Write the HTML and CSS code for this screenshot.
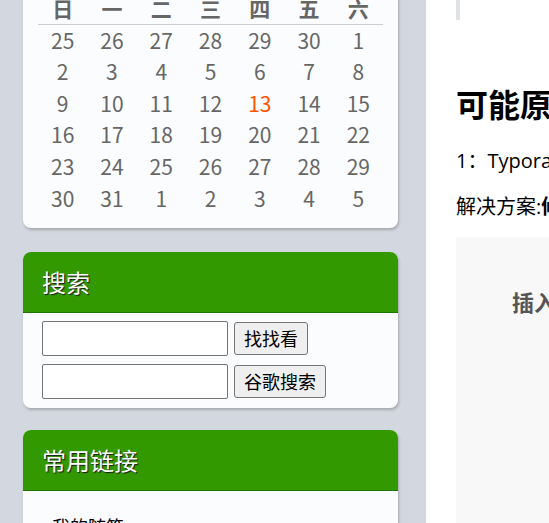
FILE: index.html
```html
<!DOCTYPE html>
<html lang="zh-CN">
<head>
<meta charset="utf-8">
<title>博客</title>
<link rel="stylesheet" href="styles.css">
</head>
<body>
<div class="page">
  <aside class="sidebar">
    <section class="card calendar">
      <div class="cal-grid">
        <div class="dow">日</div><div class="dow">一</div><div class="dow">二</div><div class="dow">三</div><div class="dow">四</div><div class="dow">五</div><div class="dow">六</div>
        <div class="day">25</div><div class="day">26</div><div class="day">27</div><div class="day">28</div><div class="day">29</div><div class="day">30</div><div class="day">1</div>
        <div class="day">2</div><div class="day">3</div><div class="day">4</div><div class="day">5</div><div class="day">6</div><div class="day">7</div><div class="day">8</div>
        <div class="day">9</div><div class="day">10</div><div class="day">11</div><div class="day">12</div><div class="day today">13</div><div class="day">14</div><div class="day">15</div>
        <div class="day">16</div><div class="day">17</div><div class="day">18</div><div class="day">19</div><div class="day">20</div><div class="day">21</div><div class="day">22</div>
        <div class="day">23</div><div class="day">24</div><div class="day">25</div><div class="day">26</div><div class="day">27</div><div class="day">28</div><div class="day">29</div>
        <div class="day">30</div><div class="day">31</div><div class="day">1</div><div class="day">2</div><div class="day">3</div><div class="day">4</div><div class="day">5</div>
      </div>
    </section>
    <section class="card search-card">
      <h3 class="card-head">搜索</h3>
      <div class="search">
        <div class="search-row"><input class="search-input" type="text"><button class="search-btn">找找看</button></div>
        <div class="search-row"><input class="search-input" type="text"><button class="search-btn">谷歌搜索</button></div>
      </div>
    </section>
    <section class="card">
      <h3 class="card-head">常用链接</h3>
      <ul class="links">
        <li>我的随笔</li>
        <li>我的评论</li>
        <li>我的参与</li>
      </ul>
    </section>
  </aside>
  <main class="main">
    <blockquote class="quote"></blockquote>
    <h2 class="title">可能原因</h2>
    <p class="para">1：Typora 图片保存路径设置不正确，导致图片无法显示</p>
    <p class="para">解决方案:<strong>修改偏好设置中的图片插入选项</strong></p>
    <div class="shot"><span class="shot-text">插入图片时</span></div>
  </main>
</div>
</body>
</html>
```
FILE: styles.css
```css
html, body {
  margin: 0;
  padding: 0;
  overflow: hidden;
}
body {
  background: #d3d7df;
  font-family: "Noto Sans CJK SC", sans-serif;
}
.page {
  width: 1200px;
  display: flex;
  align-items: flex-start;
}
.sidebar {
  width: 375px;
  padding-left: 23px;
  padding-right: 28px;
  display: flex;
  flex-direction: column;
}
.card {
  background: #fbfcfe;
  border-radius: 8px;
  box-shadow: 1px 2px 3px rgba(0, 0, 0, 0.22);
  overflow: hidden;
}
.calendar {
  margin-top: -20px;
  padding: 13px 15px 14px;
  margin-bottom: 24px;
}
.cal-grid {
  display: grid;
  grid-template-columns: repeat(7, 1fr);
  grid-auto-rows: 31.6px;
}
.dow {
  height: 32px;
  box-sizing: border-box;
  border-bottom: 1px solid #cccccc;
  text-align: center;
  font-size: 21px;
  line-height: 31px;
  font-weight: bold;
  color: #666666;
}
.day {
  text-align: center;
  font-size: 21px;
  line-height: 31.6px;
  color: #666666;
}
.today {
  color: #ff5500;
}
.search-card {
  margin-bottom: 22px;
}
.card-head {
  margin: 0;
  height: 60px;
  box-sizing: content-box;
  border-bottom: 1px solid #1f7300;
  background: #339900;
  color: #ffffff;
  font-size: 24px;
  font-weight: normal;
  line-height: 60px;
  padding-left: 19px;
  text-shadow: 1px 1px 1px #1a1a1a;
}
.search {
  padding: 8px 19px 9px;
  display: flex;
  flex-direction: column;
  gap: 8px;
}
.search-row {
  display: flex;
  align-items: center;
  gap: 6px;
}
.search-input {
  width: 186px;
  height: 35px;
  box-sizing: border-box;
  margin: 0;
  border: 1px solid #767676;
  border-radius: 2px;
  background: #ffffff;
}
.search-btn {
  margin: 0;
  height: 33px;
  box-sizing: border-box;
  padding: 0 9px;
  border: 1px solid #767676;
  border-radius: 3px;
  background: #efefef;
  color: #000000;
  font-family: "Noto Sans CJK SC", sans-serif;
  font-size: 18px;
  line-height: 31px;
}
.links {
  margin: 0;
  padding: 20px 0 10px 29px;
  list-style: none;
  font-size: 18px;
  line-height: 30px;
  color: #000000;
}
.main {
  width: 744px;
  padding-left: 30px;
  background: #ffffff;
  min-height: 600px;
  font-family: "Open Sans", "Noto Sans CJK SC", sans-serif;
  color: #000000;
}
.quote {
  margin: 0;
  height: 20px;
  border-left: 4px solid #dfe2e5;
}
.title {
  margin: 63px 0 0;
  font-size: 32px;
  line-height: 40px;
  font-weight: bold;
  font-family: "Noto Sans CJK SC", sans-serif;
}
.para {
  margin: 23px 0 0;
  font-size: 20px;
  line-height: 30px;
}
.para + .para {
  margin-top: 16px;
}
.shot {
  margin-top: 15px;
  height: 400px;
  background: #f8f8f8;
  padding: 49px 0 0 56px;
}
.shot-text {
  font-family: "Noto Sans CJK SC", sans-serif;
  font-size: 22px;
  line-height: 30px;
  font-weight: bold;
  color: #555555;
}
```
